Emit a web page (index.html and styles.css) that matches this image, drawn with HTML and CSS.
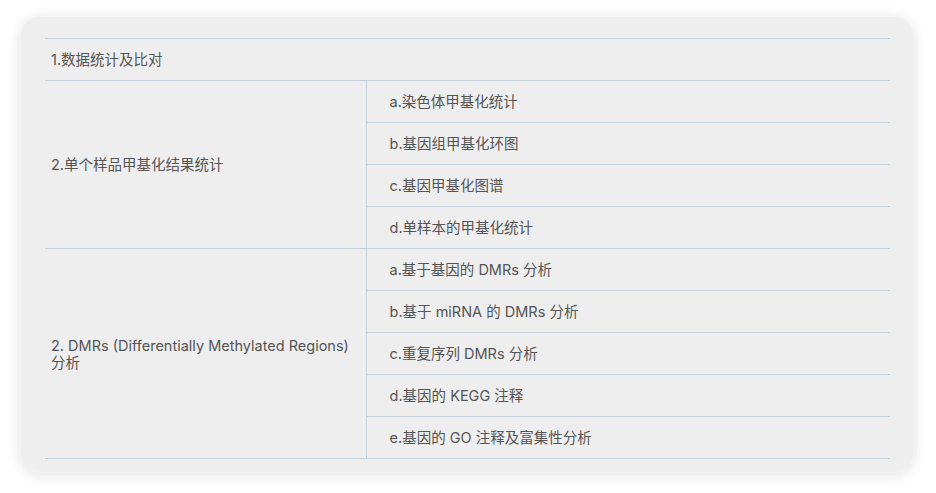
FILE: index.html
```html
<!DOCTYPE html>
<html lang="zh">
<head>
<meta charset="utf-8">
<link rel="stylesheet" href="styles.css">
</head>
<body>
<div class="card">
  <table class="analysis">
    <colgroup>
      <col class="col-main">
      <col class="col-sub">
    </colgroup>
    <tbody>
      <tr><td colspan="2" class="full">1.数据统计及比对</td></tr>
      <tr><td rowspan="4" class="main">2.单个样品甲基化结果统计</td><td class="sub">a.染色体甲基化统计</td></tr>
      <tr><td class="sub">b.基因组甲基化环图</td></tr>
      <tr><td class="sub">c.基因甲基化图谱</td></tr>
      <tr><td class="sub">d.单样本的甲基化统计</td></tr>
      <tr><td rowspan="5" class="main">2. DMRs (Differentially Methylated Regions) 分析</td><td class="sub">a.基于基因的 DMRs 分析</td></tr>
      <tr><td class="sub">b.基于 miRNA 的 DMRs 分析</td></tr>
      <tr><td class="sub">c.重复序列 DMRs 分析</td></tr>
      <tr><td class="sub">d.基因的 KEGG 注释</td></tr>
      <tr><td class="sub">e.基因的 GO 注释及富集性分析</td></tr>
    </tbody>
  </table>
</div>
</body>
</html>
```
FILE: styles.css
```css
html, body {
  margin: 0;
  padding: 0;
  background: #ffffff;
}
body {
  padding: 16px 22px 20px 20px;
  font-family: "Inter", "Noto Sans CJK SC", sans-serif;
  font-size: 14.5px;
  color: #555555;
}
.card {
  width: 894px;
  height: 457px;
  box-sizing: border-box;
  background: #eeeeee;
  border: 1px solid #f4f4f4;
  border-radius: 20px;
  box-shadow: 0 2px 14px rgba(0, 0, 0, 0.12);
  padding: 21px 23px 0 24px;
}
.analysis {
  width: 845px;
  table-layout: fixed;
  border-collapse: collapse;
  border-top: 1px solid #c6cfdc;
}
.col-main {
  width: 321px;
}
.col-sub {
  width: 524px;
}
.analysis td {
  height: 41px;
  padding: 0;
  border-bottom: 1px solid #c6cfdc;
  vertical-align: middle;
  line-height: 17px;
}
.analysis .full {
  padding-left: 6px;
}
.analysis .main {
  padding-left: 6px;
  padding-right: 5px;
  border-right: 1px solid #c6cfdc;
}
.analysis .sub {
  padding-left: 23px;
}
```
